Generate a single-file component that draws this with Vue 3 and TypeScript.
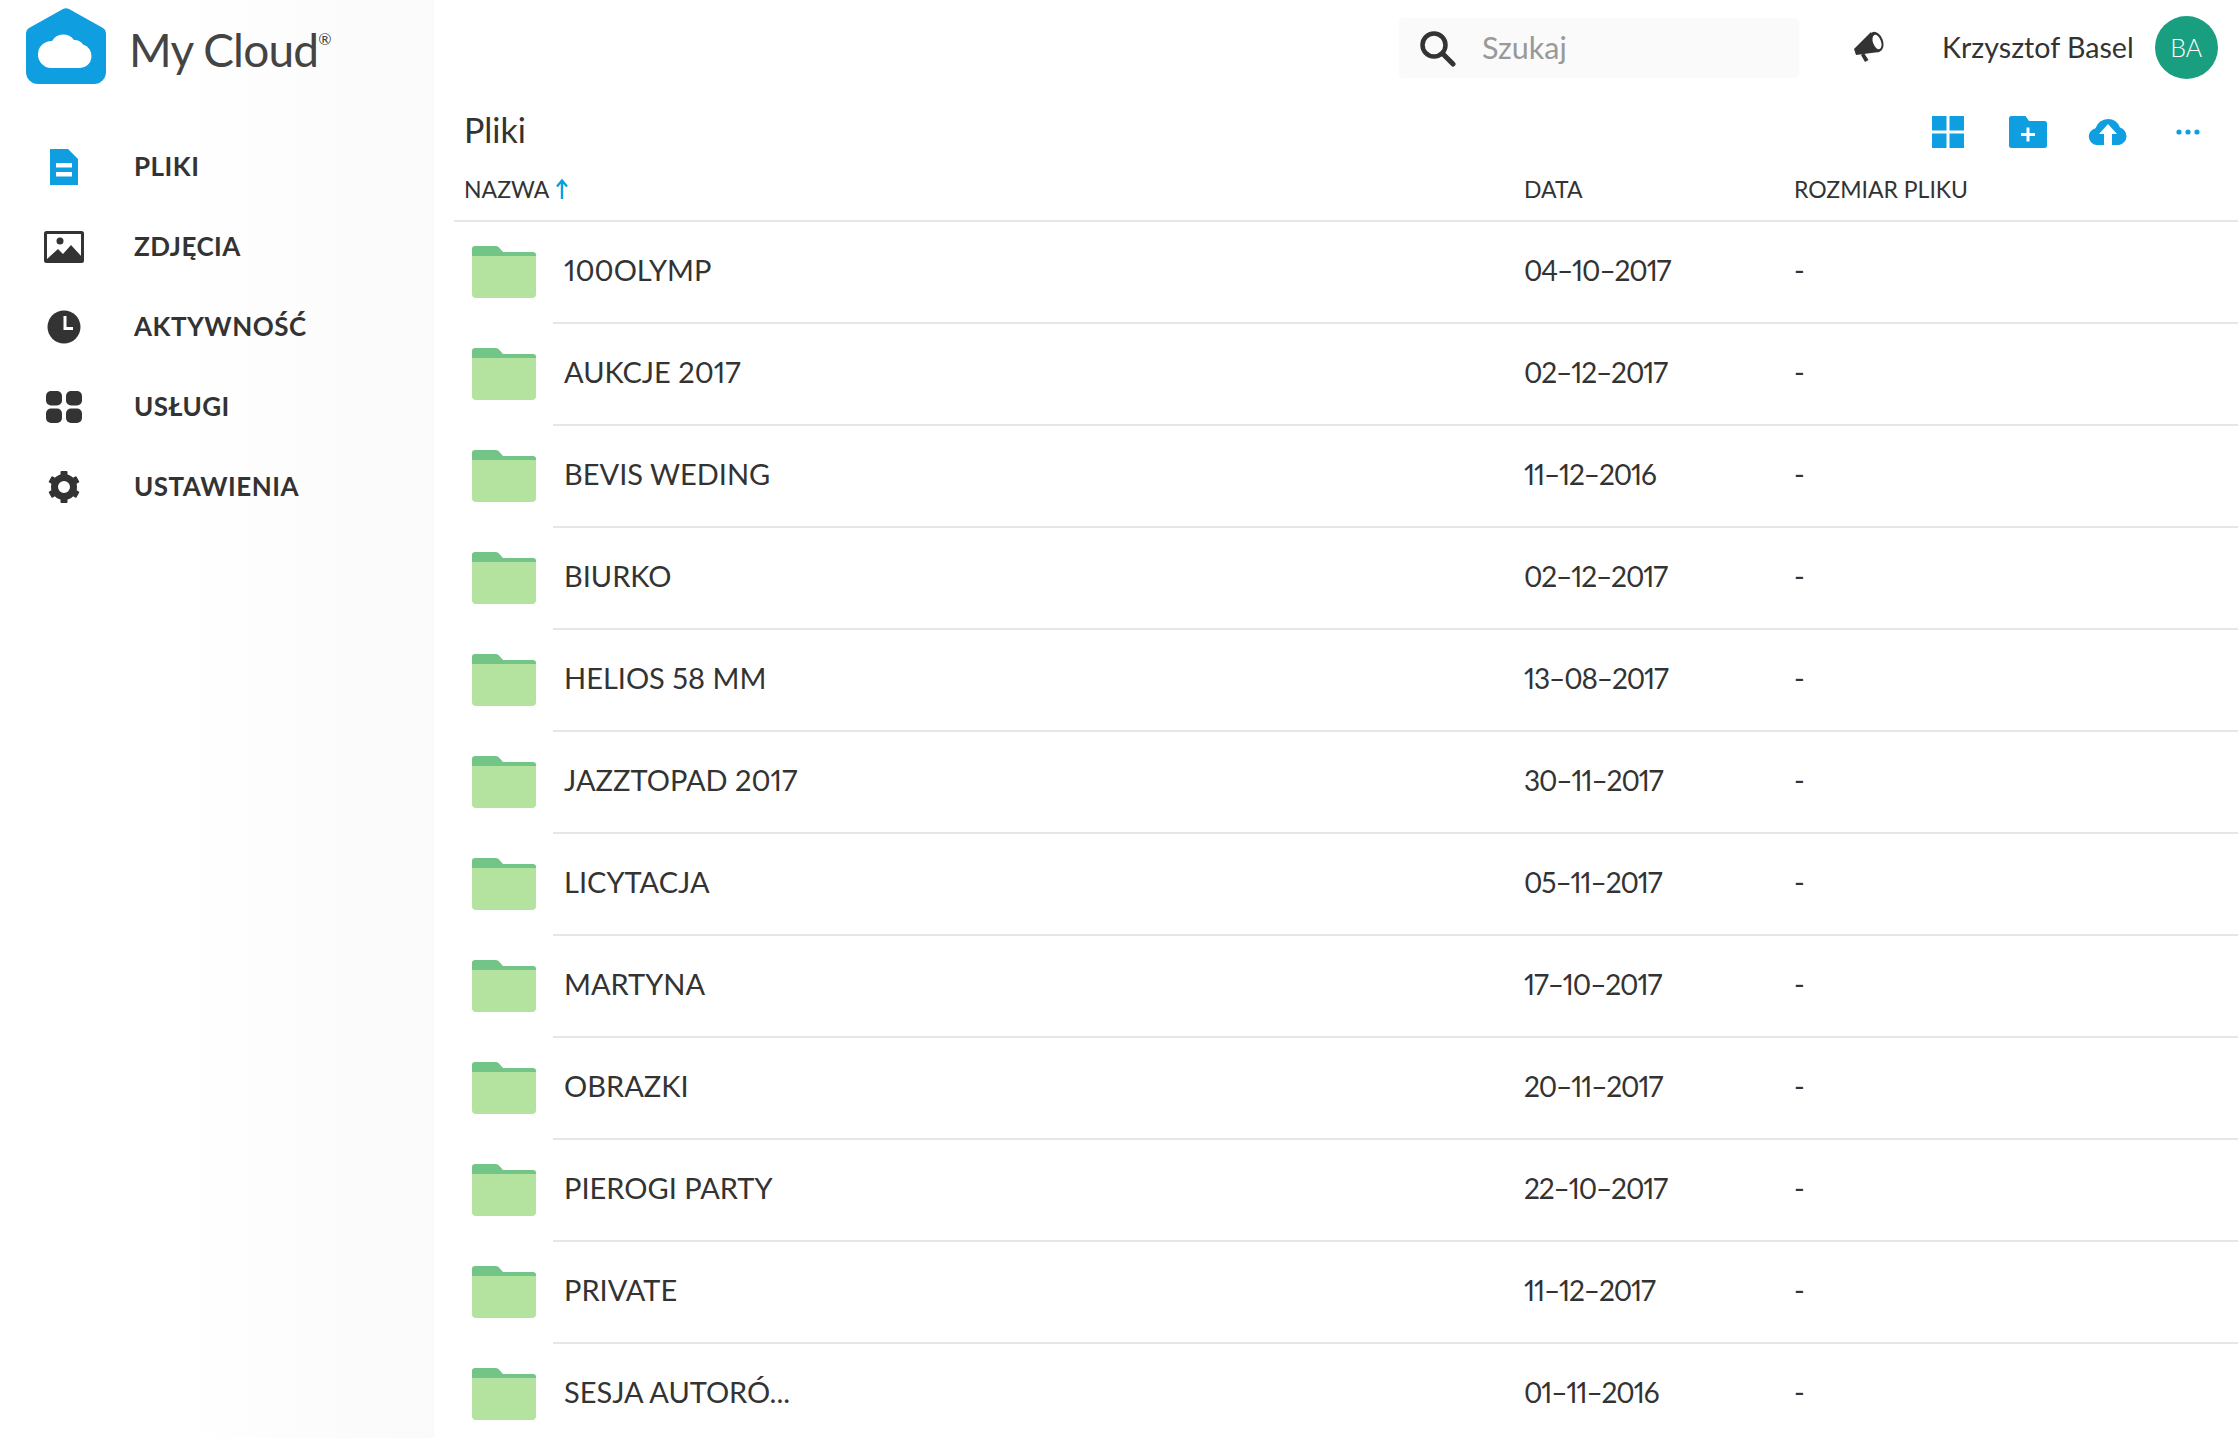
<script setup lang="ts">
interface Folder {
  name: string
  date: string
}

const folders: Folder[] = [
  { name: '100OLYMP', date: '04–10–2017' },
  { name: 'AUKCJE 2017', date: '02–12–2017' },
  { name: 'BEVIS WEDING', date: '11–12–2016' },
  { name: 'BIURKO', date: '02–12–2017' },
  { name: 'HELIOS 58 MM', date: '13–08–2017' },
  { name: 'JAZZTOPAD 2017', date: '30–11–2017' },
  { name: 'LICYTACJA', date: '05–11–2017' },
  { name: 'MARTYNA', date: '17–10–2017' },
  { name: 'OBRAZKI', date: '20–11–2017' },
  { name: 'PIEROGI PARTY', date: '22–10–2017' },
  { name: 'PRIVATE', date: '11–12–2017' },
  { name: 'SESJA AUTORÓ...', date: '01–11–2016' },
]
</script>

<template>
  <div class="app">
    <aside class="sidebar">
      <div class="brand">
        <svg class="logo" width="80" height="76" viewBox="0 0 80 76">
          <path d="M37 1a6 6 0 0 1 6 0L77 20a6 6 0 0 1 3 5V64a12 12 0 0 1-12 12H12A12 12 0 0 1 0 64V25a6 6 0 0 1 3-5Z" fill="#0f9fe0" />
          <path d="M25 60H54A12 12 0 0 0 57 36.500A10 10 0 0 0 48 32A13 13 0 0 0 26 33A13.500 13.500 0 0 0 25 60Z" fill="#fff" />
        </svg>
        <span class="brand-name">My Cloud<sup>®</sup></span>
      </div>
      <nav class="nav">
        <a class="nav-item">
          <span class="nav-icon">
            <svg width="28" height="36" viewBox="0 0 28 36">
              <path d="M0 0H18L28 10V36H0Z" fill="#0f9fe0" />
              <rect x="6" y="14" width="16" height="4.500" fill="#fff" />
              <rect x="6" y="23" width="16" height="4.500" fill="#fff" />
            </svg>
          </span>
          <span>PLIKI</span>
        </a>
        <a class="nav-item">
          <span class="nav-icon">
            <svg width="40" height="32" viewBox="0 0 40 32">
              <rect x="1.500" y="1.500" width="37" height="29" rx="1" fill="#fff" stroke="#333" stroke-width="3" />
              <circle cx="16" cy="10" r="3.500" fill="#333" />
              <path d="M3 28L14 18L19 23L27 14L38 26V30H3Z" fill="#333" />
            </svg>
          </span>
          <span>ZDJĘCIA</span>
        </a>
        <a class="nav-item">
          <span class="nav-icon">
            <svg width="34" height="34" viewBox="0 0 34 34">
              <circle cx="17" cy="17" r="16.500" fill="#333" />
              <path d="M18 6V18.500H26" fill="none" stroke="#fff" stroke-width="3" />
            </svg>
          </span>
          <span>AKTYWNOŚĆ</span>
        </a>
        <a class="nav-item">
          <span class="nav-icon">
            <svg width="36" height="32" viewBox="0 0 36 32">
              <rect width="16" height="14.500" rx="5" fill="#333" />
              <rect x="20" width="16" height="14.500" rx="5" fill="#333" />
              <rect y="17.500" width="16" height="14.500" rx="5" fill="#333" />
              <rect x="20" y="17.500" width="16" height="14.500" rx="5" fill="#333" />
            </svg>
          </span>
          <span>USŁUGI</span>
        </a>
        <a class="nav-item">
          <span class="nav-icon">
            <svg width="32" height="32" viewBox="0 0 32 32">
              <circle cx="16" cy="16" r="9.500" fill="none" stroke="#333" stroke-width="7" />
              <g fill="#333">
                <rect x="12.500" y="0" width="7" height="6" rx="1" />
                <rect x="12.500" y="26" width="7" height="6" rx="1" />
                <rect x="12.500" y="0" width="7" height="6" rx="1" transform="rotate(60 16 16)" />
                <rect x="12.500" y="0" width="7" height="6" rx="1" transform="rotate(120 16 16)" />
                <rect x="12.500" y="0" width="7" height="6" rx="1" transform="rotate(240 16 16)" />
                <rect x="12.500" y="0" width="7" height="6" rx="1" transform="rotate(300 16 16)" />
              </g>
            </svg>
          </span>
          <span>USTAWIENIA</span>
        </a>
      </nav>
    </aside>

    <main class="main">
      <header class="topbar">
        <div class="search">
          <svg width="38" height="38" viewBox="0 0 38 38">
            <circle cx="16" cy="16" r="11.500" fill="none" stroke="#333" stroke-width="4.500" />
            <path d="M24.500 24.500L35 35" stroke="#333" stroke-width="5" stroke-linecap="round" />
          </svg>
          <span class="search-text">Szukaj</span>
        </div>
        <svg class="megaphone" width="34" height="34" viewBox="0 0 34 34">
          <path d="M18 2L1 19L3 25L26 22Z" fill="#333" />
          <path d="M8 25L11 23L15.500 30L12 32Z" fill="#333" />
          <ellipse cx="23" cy="12" rx="7" ry="10.500" transform="rotate(-20 23 12)" fill="#333" />
          <ellipse cx="24" cy="12" rx="4" ry="7.500" transform="rotate(-20 24 12)" fill="#fff" />
        </svg>
        <span class="user-name">Krzysztof Basel</span>
        <span class="avatar">BA</span>
      </header>

      <div class="toolbar">
        <h1 class="title">Pliki</h1>
        <div class="actions">
          <svg width="32" height="32" viewBox="0 0 32 32" fill="#0f9fe0">
            <rect width="14.500" height="14.500" />
            <rect x="17.500" width="14.500" height="14.500" />
            <rect y="17.500" width="14.500" height="14.500" />
            <rect x="17.500" y="17.500" width="14.500" height="14.500" />
          </svg>
          <svg class="add-folder" width="38" height="32" viewBox="0 0 38 32">
            <path d="M2.500 0H16.500L20 5H35.500A2.500 2.500 0 0 1 38 7.500V29.500A2.500 2.500 0 0 1 35.500 32H2.500A2.500 2.500 0 0 1 0 29.500V2.500A2.500 2.500 0 0 1 2.500 0Z" fill="#0f9fe0" />
            <path d="M19 11.500V25.500M12 18.500H26" stroke="#fff" stroke-width="3" />
          </svg>
          <svg class="upload" width="40" height="26" viewBox="0 0 40 26">
            <path d="M9 26A8.500 8.500 0 0 1 7.500 9.200A13 13 0 0 1 20 0A13 13 0 0 1 32 8.500A9 9 0 0 1 31 26H24V15H29L20 5L11 15H16V26Z" fill="#0f9fe0" />
          </svg>
          <svg class="more" width="24" height="6" viewBox="0 0 24 6" fill="#0f9fe0">
            <circle cx="3" cy="3" r="2.600" />
            <circle cx="12" cy="3" r="2.600" />
            <circle cx="21" cy="3" r="2.600" />
          </svg>
        </div>
      </div>

      <div class="table-head">
        <span class="head-name">
          NAZWA
          <svg width="12" height="20" viewBox="0 0 12 20">
            <path d="M6 20V2M1 7.500L6 1.500L11 7.500" fill="none" stroke="#0f9fe0" stroke-width="2.400" />
          </svg>
        </span>
        <span class="col-date">DATA</span>
        <span class="col-size">ROZMIAR PLIKU</span>
      </div>

      <div v-for="folder in folders" :key="folder.name" class="row">
        <span class="row-icon">
          <svg width="64" height="52" viewBox="0 0 64 52">
            <path d="M3 0H24A4 4 0 0 1 27 1.500L31 6H61A3 3 0 0 1 64 9V12H0V3A3 3 0 0 1 3 0Z" fill="#72c487" />
            <path d="M0 10H64V48A4 4 0 0 1 60 52H4A4 4 0 0 1 0 48Z" fill="#b4e3a0" />
          </svg>
        </span>
        <div class="row-body">
          <span class="col-name">{{ folder.name }}</span>
          <span class="col-date">{{ folder.date }}</span>
          <span class="col-size">-</span>
        </div>
      </div>
    </main>
  </div>
</template>

<style>
html,
body {
  margin: 0;
  background: #fff;
  overflow: hidden;
}
</style>

<style scoped>
.app {
  display: flex;
  width: 2238px;
  height: 1438px;
  overflow: hidden;
  font-family: Lato, "Open Sans", sans-serif;
  font-feature-settings: "pnum";
  color: #333;
}

.sidebar {
  flex: 0 0 434px;
  background: linear-gradient(90deg, #fff 0%, #fff 40%, #fafafa 100%);
}

.brand {
  display: flex;
  align-items: center;
  gap: 23px;
  padding: 8px 0 0 26px;
}

.brand-name {
  padding-top: 8px;
  font-size: 46px;
  line-height: 68px;
  font-weight: 400;
  letter-spacing: -0.8px;
  color: #444;
}

.brand-name sup {
  font-size: 16px;
  line-height: 0;
  vertical-align: 22px;
  letter-spacing: 0;
}

.nav {
  display: flex;
  flex-direction: column;
  padding-top: 42px;
}

.nav-item {
  display: flex;
  align-items: center;
  height: 80px;
  font-size: 26px;
  font-weight: 700;
  letter-spacing: 0.5px;
  color: #333;
}

.nav-icon {
  display: flex;
  justify-content: center;
  align-items: center;
  flex: 0 0 134px;
  box-sizing: border-box;
  padding-top: 2px;
  padding-right: 6px;
}

.main {
  flex: 1;
  min-width: 0;
}

.topbar {
  display: flex;
  align-items: center;
  height: 94px;
  padding-right: 20px;
}

.search {
  display: flex;
  align-items: center;
  gap: 26px;
  box-sizing: border-box;
  width: 400px;
  height: 60px;
  margin-left: 965px;
  margin-top: 2px;
  padding-left: 19px;
  background: #fafafa;
  border-radius: 4px;
}

.search-text {
  font-size: 30.500px;
  color: #999;
  margin-top: -2px;
}

.megaphone {
  margin-left: 54px;
}

.user-name {
  margin-left: 55px;
  font-size: 28.600px;
  color: #333;
}

.avatar {
  display: flex;
  align-items: center;
  justify-content: center;
  width: 63px;
  height: 63px;
  margin-left: 21px;
  border-radius: 50%;
  background: #1a9e80;
  color: #fff;
  font-size: 25px;
  font-weight: 300;
}

.toolbar {
  display: flex;
  align-items: center;
  justify-content: space-between;
  height: 70px;
  padding-left: 30px;
}

.title {
  margin: 0;
  font-size: 34px;
  font-weight: 400;
}

.actions {
  display: flex;
  align-items: center;
  padding-top: 6px;
  padding-right: 38px;
}

.add-folder {
  margin-left: 45px;
}

.upload {
  margin-left: 41px;
}

.more {
  margin-left: 48px;
}

.table-head {
  display: flex;
  align-items: center;
  box-sizing: border-box;
  height: 58px;
  margin-left: 20px;
  padding-left: 10px;
  padding-bottom: 6px;
  border-bottom: 2px solid #e6e6e6;
  font-size: 23px;
}

.head-name {
  display: flex;
  align-items: center;
  gap: 7px;
  flex: 0 0 1060px;
}

.row {
  display: flex;
  height: 102px;
}

.row-icon {
  display: flex;
  align-items: center;
  flex: 0 0 119px;
  box-sizing: border-box;
  padding-left: 38px;
  padding-bottom: 2px;
}

.row-body {
  display: flex;
  align-items: center;
  flex: 1;
  box-sizing: border-box;
  padding-bottom: 5px;
  border-bottom: 2px solid #e6e6e6;
  font-size: 29px;
}

.col-name {
  flex: 0 0 971px;
  padding-left: 11px;
  box-sizing: border-box;
}

.col-date {
  flex: 0 0 270px;
}

.row-body .col-date {
  font-size: 28px;
  letter-spacing: -1.1px;
}

.col-size {
  flex: 1;
}
</style>
